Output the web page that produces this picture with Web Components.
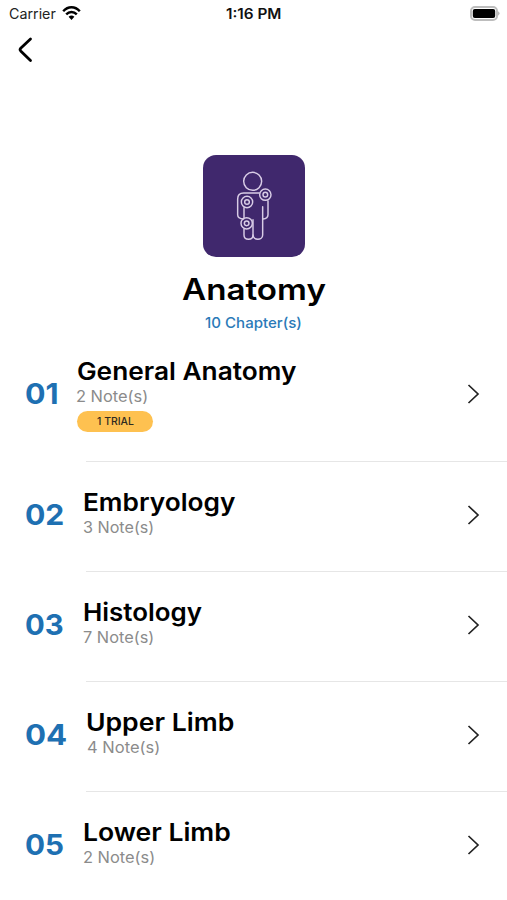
<!DOCTYPE html>
<html lang="en">
<head>
<meta charset="utf-8">
<title>Anatomy</title>
<style>
  body {
    margin: 0;
    background: #fff;
    font-family: Inter, "Liberation Sans", sans-serif;
    overflow: hidden;
  }
</style>
</head>
<body>
<chapter-screen></chapter-screen>

<script>
class StatusBar extends HTMLElement {
  connectedCallback() {
    this.attachShadow({ mode: 'open' });
    this.shadowRoot.innerHTML = `
      <style>
        :host {
          display: grid;
          grid-template-columns: 1fr auto 1fr;
          align-items: center;
          height: 26px;
          padding: 0 7px 0 9px;
          box-sizing: border-box;
          font-size: 14px;
          color: #222;
        }
        .left { display: flex; align-items: center; gap: 6px; }
        .time { font-weight: 600; color: #111; margin-right: 2px; }
        .battery { justify-self: end; }
        svg { display: block; }
      </style>
      <div class="left">
        <fit-text width="46.5">Carrier</fit-text>
        <svg width="19" height="15" viewBox="0 0 19 15" fill="none" stroke="#000" stroke-width="2.4">
          <path d="M1.2 5.2C6-.1 13-.1 17.8 5.2"/>
          <path d="M4.2 8.4C7.3 5.1 11.7 5.1 14.8 8.4"/>
          <path d="M6.6 10.7Q9.5 8.3 12.4 10.7L9.5 13.9Z" fill="#000" stroke="none"/>
        </svg>
      </div>
      <fit-text class="time" width="54.5">1:16 PM</fit-text>
      <svg class="battery" width="30" height="15" viewBox="0 0 30 15">
        <rect x="1" y="1" width="26" height="13" rx="4" fill="#fff" stroke="#bdbdbd" stroke-width="2"/>
        <rect x="2.8" y="2.9" width="22.4" height="9.2" rx="2" fill="#000"/>
        <path d="M28.2 5.3q2.6 2.2 0 4.4z" fill="#aaa"/>
      </svg>
    `;
  }
}

class SubjectHeader extends HTMLElement {
  connectedCallback() {
    this.attachShadow({ mode: 'open' });
    this.shadowRoot.innerHTML = `
      <style>
        :host {
          display: flex;
          flex-direction: column;
          align-items: center;
          height: 267px;
          box-sizing: border-box;
          padding: 90.5px 0 0 1px;
        }
        svg { display: block; flex: none; border-radius: 13px; background: #40286d; }
        .title {
          margin-top: 13px;
          line-height: 38px;
          font-size: 29.5px;
          font-weight: 560;
          color: #000;
        }
        .count {
          margin: 5px 2px 0 0;
          line-height: 20px;
          font-size: 14.5px;
          font-weight: 450;
          color: #2a7ab8;
        }
      </style>
      <svg width="102" height="102" viewBox="24 28 306 306" fill="none" stroke="#d8cce6" stroke-width="4.4" stroke-linecap="round">
        <circle cx="173" cy="107" r="27"/>
        <path d="M193 142H146Q128 142 128 160V207Q128 219 146 220"/>
        <path d="M219 166V207Q219 218 204 220"/>
        <path d="M147 186V216M147 250V268C147 285 174 285 174 268V222"/>
        <path d="M174 268C174 285 203 285 203 268V183"/>
        <circle cx="211" cy="147" r="17"/>
        <circle cx="211" cy="147" r="7"/>
        <circle cx="156" cy="169" r="17"/>
        <circle cx="156" cy="169" r="7"/>
        <circle cx="155" cy="233" r="17"/>
        <circle cx="155" cy="233" r="7"/>
      </svg>
      <fit-text class="title" width="143.5"><slot></slot></fit-text>
      <fit-text class="count" width="95.5">${this.getAttribute('count')} Chapter(s)</fit-text>
    `;
  }
}

class ChapterRow extends HTMLElement {
  connectedCallback() {
    const trial = this.getAttribute('trial');
    // widths: number, title, notes
    const [numW, titleW, noteW] = this.getAttribute('widths').split(' ');
    this.attachShadow({ mode: 'open' });
    this.shadowRoot.innerHTML = `
      <style>
        :host { display: block; }
        .row {
          display: flex;
          align-items: center;
          padding: 26px 27px 29px 26px;
        }
        .number {
          font-size: 29px;
          font-weight: 700;
          line-height: 34px;
          color: #1e70b2;
        }
        .info { flex: 1; margin-left: 20px; }
        .title {
          margin-left: .5px;
          font-size: 24.5px;
          font-weight: 560;
          line-height: 28px;
          color: #000;
        }
        .notes {
          font-size: 15.5px;
          line-height: 24px;
          margin: 0 0 2px;
          color: #8b8b8b;
        }
        .trial {
          display: flex;
          align-items: center;
          justify-content: center;
          width: 76px;
          height: 20.5px;
          border-radius: 11px;
          background: #fec150;
          font-size: 10.5px;
          font-weight: 500;
          color: #2f2a20;
        }
        .line { height: 1px; margin-left: 86px; background: #e6e6e6; }
      </style>
      <div class="row">
        <fit-text class="number" width="${numW}">${this.getAttribute('number')}</fit-text>
        <div class="info">
          <fit-text class="title" width="${titleW}"><slot></slot></fit-text>
          <fit-text class="notes" width="${noteW}">${this.getAttribute('notes')} Note(s)</fit-text>
          ${trial ? `<div class="trial"><fit-text width="37">${trial} TRIAL</fit-text></div>` : ''}
        </div>
        <svg width="13" height="20" viewBox="0 0 13 20" fill="none" stroke="#222" stroke-width="1.7">
          <path d="M1.5 1L11 10L1.5 19"/>
        </svg>
      </div>
      <div class="line"></div>
    `;
  }
}

class ChapterScreen extends HTMLElement {
  connectedCallback() {
    this.attachShadow({ mode: 'open' });
    this.shadowRoot.innerHTML = `
      <style>
        :host {
          display: block;
          width: 507px;
          height: 900px;
          overflow: hidden;
          background: #fff;
        }
        .back { display: block; margin: 10px 0 0 17px; }
      </style>
      <status-bar></status-bar>
      <svg class="back" width="17" height="28" viewBox="0 0 17 28" fill="none" stroke="#000" stroke-width="2.8" stroke-linecap="round" stroke-linejoin="round">
        <path d="M13.5 3L3.7 12.3Q2.5 13.6 3.7 14.9L13.5 24.5"/>
      </svg>
      <subject-header count="10">Anatomy</subject-header>
      <chapter-row number="01" notes="2" trial="1" widths="31 218 69.5">General Anatomy</chapter-row>
      <chapter-row number="02" notes="3" widths="37 151 69.5">Embryology</chapter-row>
      <chapter-row number="03" notes="7" widths="37 117.5 69.5">Histology</chapter-row>
      <chapter-row number="04" notes="4" widths="40.5 147 71.5">Upper Limb</chapter-row>
      <chapter-row number="05" notes="2" widths="37.5 146.5 69.5">Lower Limb</chapter-row>
    `;
  }
}

// Single line of text stretched so its glyphs span the given width
class FitText extends HTMLElement {
  connectedCallback() {
    this.attachShadow({ mode: 'open' });
    this.shadowRoot.innerHTML = `
      <style>
        :host { display: block; white-space: nowrap; }
        span { display: inline-block; transform-origin: 0 50%; }
      </style>
      <span><slot></slot></span>
    `;

    const slot = this.querySelector('slot');
    const text = slot ? this.getRootNode().host.textContent : this.textContent;
    const width = parseFloat(this.getAttribute('width'));
    const style = getComputedStyle(this);
    const ctx = document.createElement('canvas').getContext('2d');
    ctx.font = `${style.fontWeight} ${style.fontSize} ${style.fontFamily}`;
    const m = ctx.measureText(text.trim());
    const left = -m.actualBoundingBoxLeft;
    const scale = width / (m.actualBoundingBoxRight - left);

    this.style.width = width + 'px';
    this.shadowRoot.querySelector('span').style.transform =
      `translateX(${-left * scale}px) scaleX(${scale})`;
  }
}

customElements.define('chapter-screen', ChapterScreen);
customElements.define('status-bar', StatusBar);
customElements.define('subject-header', SubjectHeader);
customElements.define('chapter-row', ChapterRow);
customElements.define('fit-text', FitText);
</script>
</body>
</html>
